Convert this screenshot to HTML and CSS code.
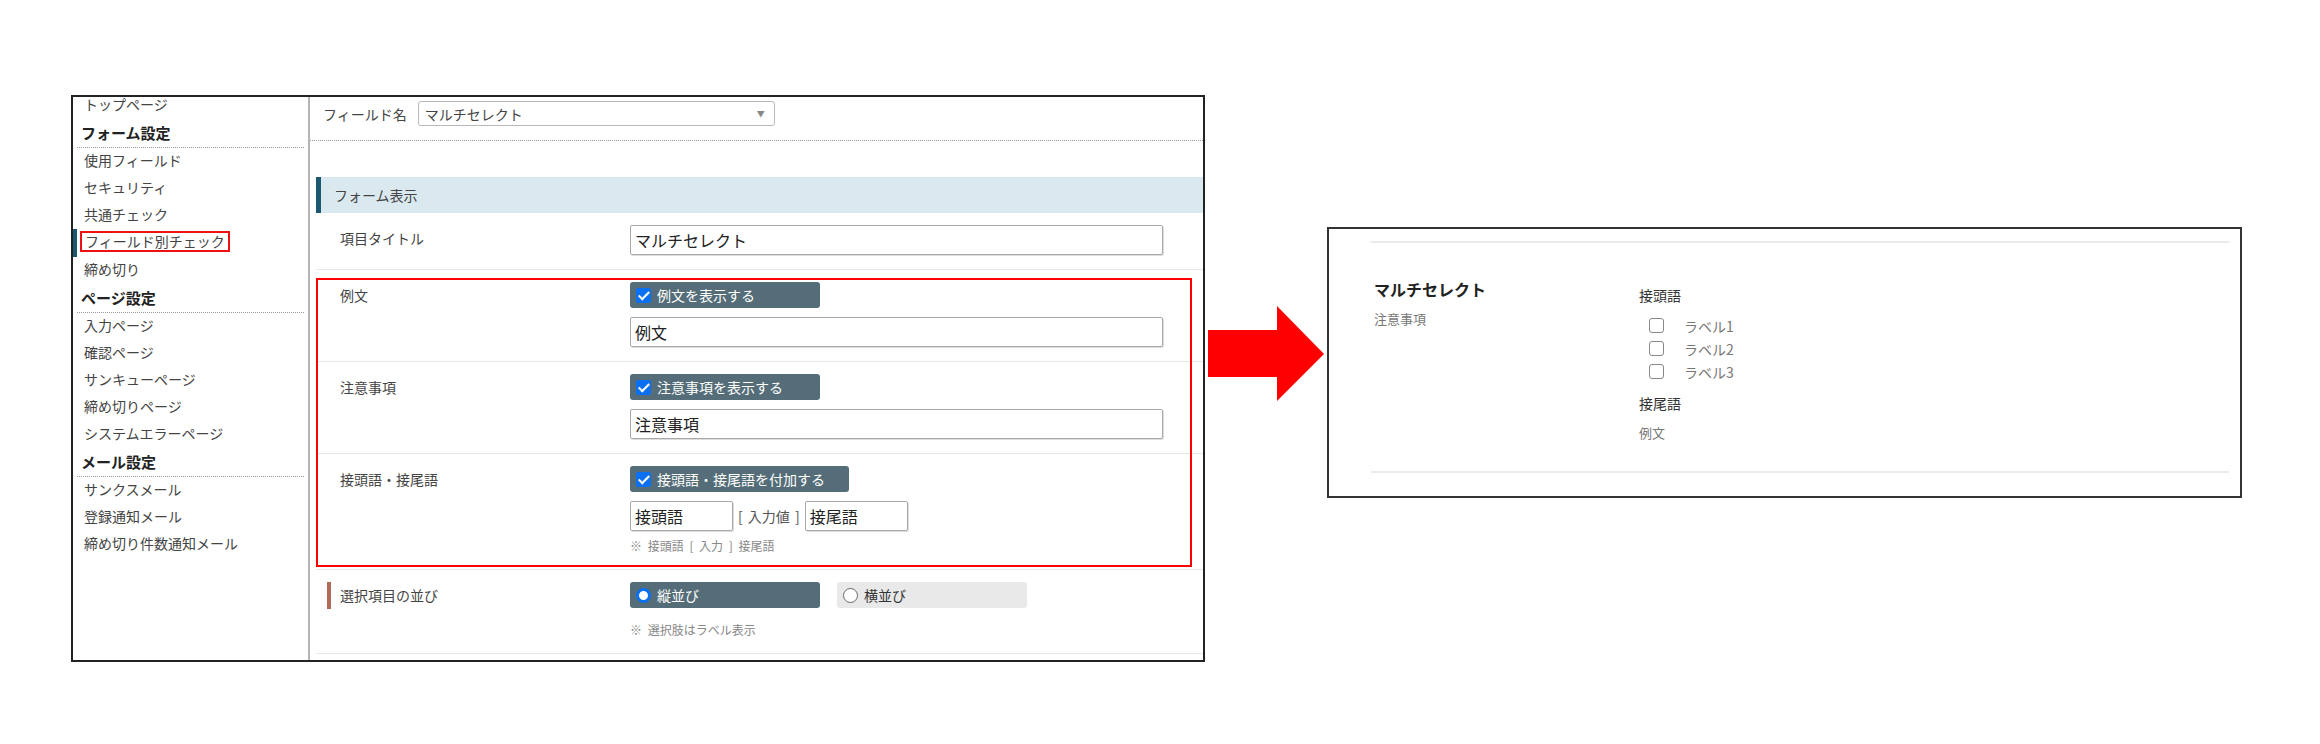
FILE: index.html
```html
<!DOCTYPE html>
<html lang="ja">
<head>
    <meta charset="UTF-8">
    <title>フィールド別チェック</title>
    <link rel="stylesheet" href="styles.css">
</head>
<body>
    <div class="stage">
        <!-- Admin screen -->
        <div class="admin">
            <div class="sidebar">
                <a class="side-item" href="#">トップページ</a>
                <div class="side-head">フォーム設定</div>
                <a class="side-item" href="#">使用フィールド</a>
                <a class="side-item" href="#">セキュリティ</a>
                <a class="side-item" href="#">共通チェック</a>
                <a class="side-item current" href="#"><span class="mark">フィールド別チェック</span></a>
                <a class="side-item" href="#">締め切り</a>
                <div class="side-head">ページ設定</div>
                <a class="side-item" href="#">入力ページ</a>
                <a class="side-item" href="#">確認ページ</a>
                <a class="side-item" href="#">サンキューページ</a>
                <a class="side-item" href="#">締め切りページ</a>
                <a class="side-item" href="#">システムエラーページ</a>
                <div class="side-head">メール設定</div>
                <a class="side-item" href="#">サンクスメール</a>
                <a class="side-item" href="#">登録通知メール</a>
                <a class="side-item" href="#">締め切り件数通知メール</a>
            </div>

            <div class="main">
                <div class="field-bar">
                    <span class="field-bar-label">フィールド名</span>
                    <div class="select">
                        <span>マルチセレクト</span>
                        <span class="select-arrow">▼</span>
                    </div>
                </div>

                <div class="section-title">フォーム表示</div>

                <div class="row">
                    <div class="row-label">項目タイトル</div>
                    <div class="row-body">
                        <div class="text-input">マルチセレクト</div>
                    </div>
                </div>

                <div class="highlight-group">
                    <div class="row">
                        <div class="row-label">例文</div>
                        <div class="row-body">
                            <label class="toggle"><span class="check"></span>例文を表示する</label>
                            <div class="text-input">例文</div>
                        </div>
                    </div>
                    <div class="row">
                        <div class="row-label">注意事項</div>
                        <div class="row-body">
                            <label class="toggle"><span class="check"></span>注意事項を表示する</label>
                            <div class="text-input">注意事項</div>
                        </div>
                    </div>
                    <div class="row">
                        <div class="row-label">接頭語・接尾語</div>
                        <div class="row-body">
                            <label class="toggle"><span class="check"></span>接頭語・接尾語を付加する</label>
                            <div class="affix">
                                <div class="text-input short">接頭語</div>
                                <span class="affix-mid">[ 入力値 ]</span>
                                <div class="text-input short">接尾語</div>
                            </div>
                            <div class="note">※ 接頭語 [ 入力 ] 接尾語</div>
                        </div>
                    </div>
                    <div class="red-frame"></div>
                </div>

                <div class="row">
                    <div class="row-label required">選択項目の並び</div>
                    <div class="row-body">
                        <div class="radios">
                            <label class="toggle"><span class="radio on"></span>縦並び</label>
                            <label class="toggle off"><span class="radio"></span>横並び</label>
                        </div>
                        <div class="note">※ 選択肢はラベル表示</div>
                    </div>
                </div>
            </div>
        </div>

        <!-- Arrow -->
        <svg class="arrow" width="116" height="95" viewBox="0 0 116 95">
            <polygon points="0,24 69,24 69,0 116,48 69,95 69,71 0,71" fill="#ff0000"/>
        </svg>

        <!-- Result preview -->
        <div class="preview">
            <div class="preview-line"></div>
            <div class="preview-body">
                <div class="preview-left">
                    <div class="preview-title">マルチセレクト</div>
                    <div class="preview-note">注意事項</div>
                </div>
                <div class="preview-right">
                    <div class="preview-affix">接頭語</div>
                    <ul class="choices">
                        <li><span class="box"></span>ラベル1</li>
                        <li><span class="box"></span>ラベル2</li>
                        <li><span class="box"></span>ラベル3</li>
                    </ul>
                    <div class="preview-affix suffix">接尾語</div>
                    <div class="preview-note example">例文</div>
                </div>
            </div>
            <div class="preview-line"></div>
        </div>
    </div>
</body>
</html>
```

FILE: styles.css
```css
body {
    margin: 0;
    background-color: #fff;
    font-family: "Noto Sans CJK JP", "Noto Sans", sans-serif;
    color: #333;
}

.stage {
    display: flex;
    align-items: flex-start;
    padding: 95px 0 0 71px;
}

/* Admin screen */
.admin {
    display: flex;
    width: 1134px;
    height: 567px;
    border: 2px solid #222;
    box-sizing: border-box;
    overflow: hidden;
}

.sidebar {
    width: 235px;
    flex-shrink: 0;
    border-right: 2px solid #b5b5b5;
    margin-top: -5px;
}

.side-item {
    display: block;
    padding: 2px 0 5px 11px;
    line-height: 20px;
    font-size: 14px;
    color: #444;
    text-decoration: none;
}

.side-item.current {
    border-left: 4px solid #1c5870;
    padding-left: 7px;
}

.mark {
    display: inline-block;
    line-height: 17px;
    padding: 0 3px;
    margin-left: -4px;
    border: 2px solid #ee1111;
}

.side-head {
    margin: 0 4px;
    padding: 4px 0 4px 4px;
    line-height: 20px;
    font-size: 15px;
    font-weight: bold;
    color: #222;
    border-bottom: 1px dotted #999;
}

.main {
    flex: 1;
    min-width: 0;
}

.field-bar {
    display: flex;
    align-items: center;
    padding: 4px 13px 14px;
    border-bottom: 1px dotted #999;
    font-size: 14px;
}

.field-bar-label {
    margin-right: 11px;
    color: #444;
}

.select {
    display: flex;
    justify-content: space-between;
    align-items: center;
    width: 357px;
    height: 25px;
    padding: 0 9px 0 6px;
    box-sizing: border-box;
    border: 1px solid #b8b8b8;
    border-radius: 3px;
    color: #444;
}

.select-arrow {
    font-size: 8px;
    color: #888;
}

.section-title {
    margin: 36px 0 0 6px;
    height: 36px;
    line-height: 36px;
    padding-left: 13px;
    background-color: #dae9f0;
    border-left: 5px solid #1c5870;
    font-size: 14px;
    color: #444;
}

/* Form rows */
.row {
    display: flex;
    margin-left: 6px;
    padding: 12px 0 14px;
    border-bottom: 1px solid #e8e8e8;
}

.row-label {
    width: 290px;
    margin-left: 11px;
    padding-left: 9px;
    border-left: 4px solid transparent;
    height: 27px;
    line-height: 27px;
    font-size: 14px;
    color: #444;
}

.row-label.required {
    border-left-color: #b06a55;
}

.row-body {
    display: flex;
    flex-direction: column;
    align-items: flex-start;
}

.text-input {
    width: 533px;
    height: 30px;
    line-height: 28px;
    padding: 0 4px;
    box-sizing: border-box;
    border: 1px solid #a8a8a8;
    border-radius: 2px;
    box-shadow: 1px 1px 0 #ddd;
    font-size: 16px;
    color: #222;
}

.text-input.short {
    width: 103px;
}

.toggle {
    display: flex;
    align-items: center;
    min-width: 190px;
    height: 26px;
    padding: 0 24px 0 6px;
    box-sizing: border-box;
    margin-bottom: 9px;
    background-color: #546d78;
    border-radius: 3px;
    font-size: 14px;
    color: #fff;
}

.toggle.off {
    background-color: #e9e9e9;
    color: #333;
}

.check {
    position: relative;
    width: 15px;
    height: 15px;
    margin-right: 6px;
    background-color: #0a6ff0;
    border-radius: 2px;
}

.check::after {
    content: '';
    position: absolute;
    left: 5px;
    top: 1px;
    width: 4px;
    height: 9px;
    border: solid #fff;
    border-width: 0 2px 2px 0;
    transform: rotate(45deg);
}

.radio {
    width: 15px;
    height: 15px;
    margin-right: 6px;
    box-sizing: border-box;
    border: 1.5px solid #666;
    border-radius: 50%;
    background-color: #fff;
}

.radio.on {
    border: 3px solid #0a6ff0;
}

.radios {
    display: flex;
    gap: 17px;
}

.affix {
    display: flex;
    align-items: center;
}

.affix-mid {
    margin: 0 5px;
    font-size: 14px;
    word-spacing: 2px;
    color: #555;
}

.note {
    margin-top: 6px;
    line-height: 18px;
    font-size: 12px;
    word-spacing: 3px;
    color: #888;
}

.radios + .note {
    margin-top: 4px;
}

.highlight-group {
    position: relative;
}

/* annotation box drawn over the rows */
.red-frame {
    position: absolute;
    top: 8px;
    left: 6px;
    right: 11px;
    bottom: 3px;
    border: 2px solid #ff0000;
    pointer-events: none;
}

/* Arrow */
.arrow {
    margin: 211px 0 0 3px;
    flex-shrink: 0;
}

/* Result preview */
.preview {
    width: 915px;
    margin: 132px 0 0 3px;
    padding: 12px 11px 23px 42px;
    box-sizing: border-box;
    border: 2px solid #333;
    flex-shrink: 0;
}

.preview-line {
    border-top: 2px solid #ebebeb;
}

.preview-body {
    display: flex;
    padding: 34px 3px 28px;
}

.preview-left {
    width: 265px;
}

.preview-title {
    line-height: 24px;
    font-size: 16px;
    font-weight: bold;
    color: #222;
}

.preview-note {
    margin-top: 8px;
    line-height: 20px;
    font-size: 13px;
    color: #777;
}

.preview-right {
    padding-top: 7px;
}

.preview-affix {
    line-height: 22px;
    font-size: 14px;
    color: #333;
}

.preview-affix.suffix {
    margin-top: 9px;
}

.preview-note.example {
    margin-top: 9px;
}

.choices {
    list-style: none;
    margin: 8px 0 0;
    padding: 0 0 0 10px;
}

.choices li {
    display: flex;
    align-items: center;
    height: 23px;
    font-size: 14px;
    color: #777;
}

.box {
    width: 15px;
    height: 15px;
    margin-right: 20px;
    box-sizing: border-box;
    border: 1.5px solid #888;
    border-radius: 3px;
}
```
